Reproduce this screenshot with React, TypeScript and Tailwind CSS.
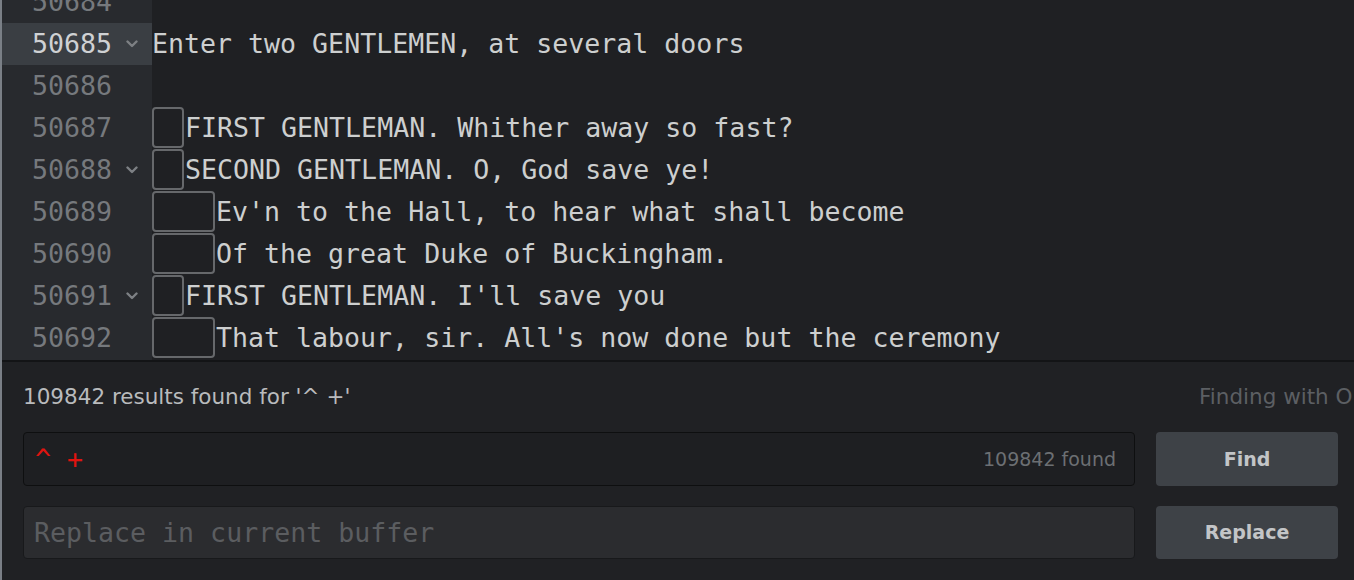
import React from 'react';

type Line = { n: number; indent: number; text: string; fold?: boolean; active?: boolean };

const lines: Line[] = [
  { n: 50684, indent: 0, text: '' },
  { n: 50685, indent: 0, text: 'Enter two GENTLEMEN, at several doors', fold: true, active: true },
  { n: 50686, indent: 0, text: '' },
  { n: 50687, indent: 2, text: 'FIRST GENTLEMAN. Whither away so fast?' },
  { n: 50688, indent: 2, text: 'SECOND GENTLEMAN. O, God save ye!', fold: true },
  { n: 50689, indent: 4, text: "Ev'n to the Hall, to hear what shall become" },
  { n: 50690, indent: 4, text: 'Of the great Duke of Buckingham.' },
  { n: 50691, indent: 2, text: "FIRST GENTLEMAN. I'll save you", fold: true },
  { n: 50692, indent: 4, text: "That labour, sir. All's now done but the ceremony" },
];

const mono = "font-['DejaVu_Sans_Mono','Liberation_Mono',monospace]";
const sans = "font-['DejaVu_Sans','Liberation_Sans',sans-serif]";

function Chevron() {
  // small fold arrow in the gutter
  return (
    <svg width="12" height="8" viewBox="0 0 12 8" className="shrink-0">
      <polyline points="1.5,1.5 6,6 10.5,1.5" fill="none" stroke="#7d8084" strokeWidth="2.4" strokeLinecap="round" strokeLinejoin="round" />
    </svg>
  );
}

function EditorRow({ line }: { line: Line }) {
  return (
    <div className="flex h-[42px]">
      <div
        className={`flex w-[150px] shrink-0 items-center ${line.active ? 'bg-[#3a3e43] text-[#cfd1d3]' : 'text-[#76797d]'}`}
      >
        <span className="w-[110px] text-right">{line.n}</span>
        <span className="ml-[14px] flex w-[14px] items-center">{line.fold && <Chevron />}</span>
      </div>
      <div className="flex items-center whitespace-pre text-[#cdcfcf]">
        {line.indent > 0 && (
          <span
            className={`mr-[1px] h-[41px] self-start rounded-[4px] border-2 border-[#66686b] ${line.indent === 2 ? 'w-[32px]' : 'w-[63px]'}`}
          />
        )}
        {line.text}
      </div>
    </div>
  );
}

export default function App() {
  return (
    <div className="flex h-[580px] w-[1354px] overflow-hidden bg-[#1f2023]">
      <div className="w-[2px] shrink-0 bg-[#7a7f86]" />
      <div className="flex min-w-0 flex-1 flex-col">
        <div className={`relative h-[360px] shrink-0 overflow-hidden bg-[#1f2023] ${mono} text-[26.6px] leading-[42px]`}>
          <div className="absolute inset-y-0 left-0 w-[150px] bg-[#282a2e]" />
          <div className="relative -mt-[19px]">
            {lines.map((l) => (
              <EditorRow key={l.n} line={l} />
            ))}
          </div>
        </div>

        <div className="flex flex-1 flex-col border-t-2 border-[#131416] bg-[#202124] pl-[21px] pr-[16px]">
          <div className={`flex h-[70px] items-center justify-between ${sans} text-[21.5px]`}>
            <span className="whitespace-nowrap text-[#b9bbbd]">109842 results found for '^ +'</span>
            <span className="w-[139px] shrink-0 whitespace-nowrap text-[#5c5f63]">Finding with O</span>
          </div>
          <div className="flex gap-[21px]">
            <div className="flex h-[54px] flex-1 items-center justify-between rounded-[4px] border border-[#0e0f10] bg-[#1e1f22] pl-[11px] pr-[18px]">
              <span className={`${mono} text-[26.6px] whitespace-pre text-[#e0140f]`}>^ +</span>
              <span className={`${sans} text-[19px] text-[#6c6f73]`}>109842 found</span>
            </div>
            <button className={`h-[54px] w-[182px] rounded-[4px] bg-[#3e4247] ${sans} text-[19px] font-semibold text-[#c3c5c7]`}>
              Find
            </button>
          </div>
          <div className="mt-[20px] flex gap-[21px]">
            <div className="flex h-[53px] flex-1 items-center rounded-[4px] border border-[#18191b] bg-[#2b2c2f] pl-[10px]">
              <span className={`${mono} text-[26.6px] whitespace-pre text-[#5b5d60]`}>Replace in current buffer</span>
            </div>
            <button className={`h-[53px] w-[182px] rounded-[4px] bg-[#3e4247] ${sans} text-[19px] font-semibold text-[#c3c5c7]`}>
              Replace
            </button>
          </div>
        </div>
      </div>
    </div>
  );
}
